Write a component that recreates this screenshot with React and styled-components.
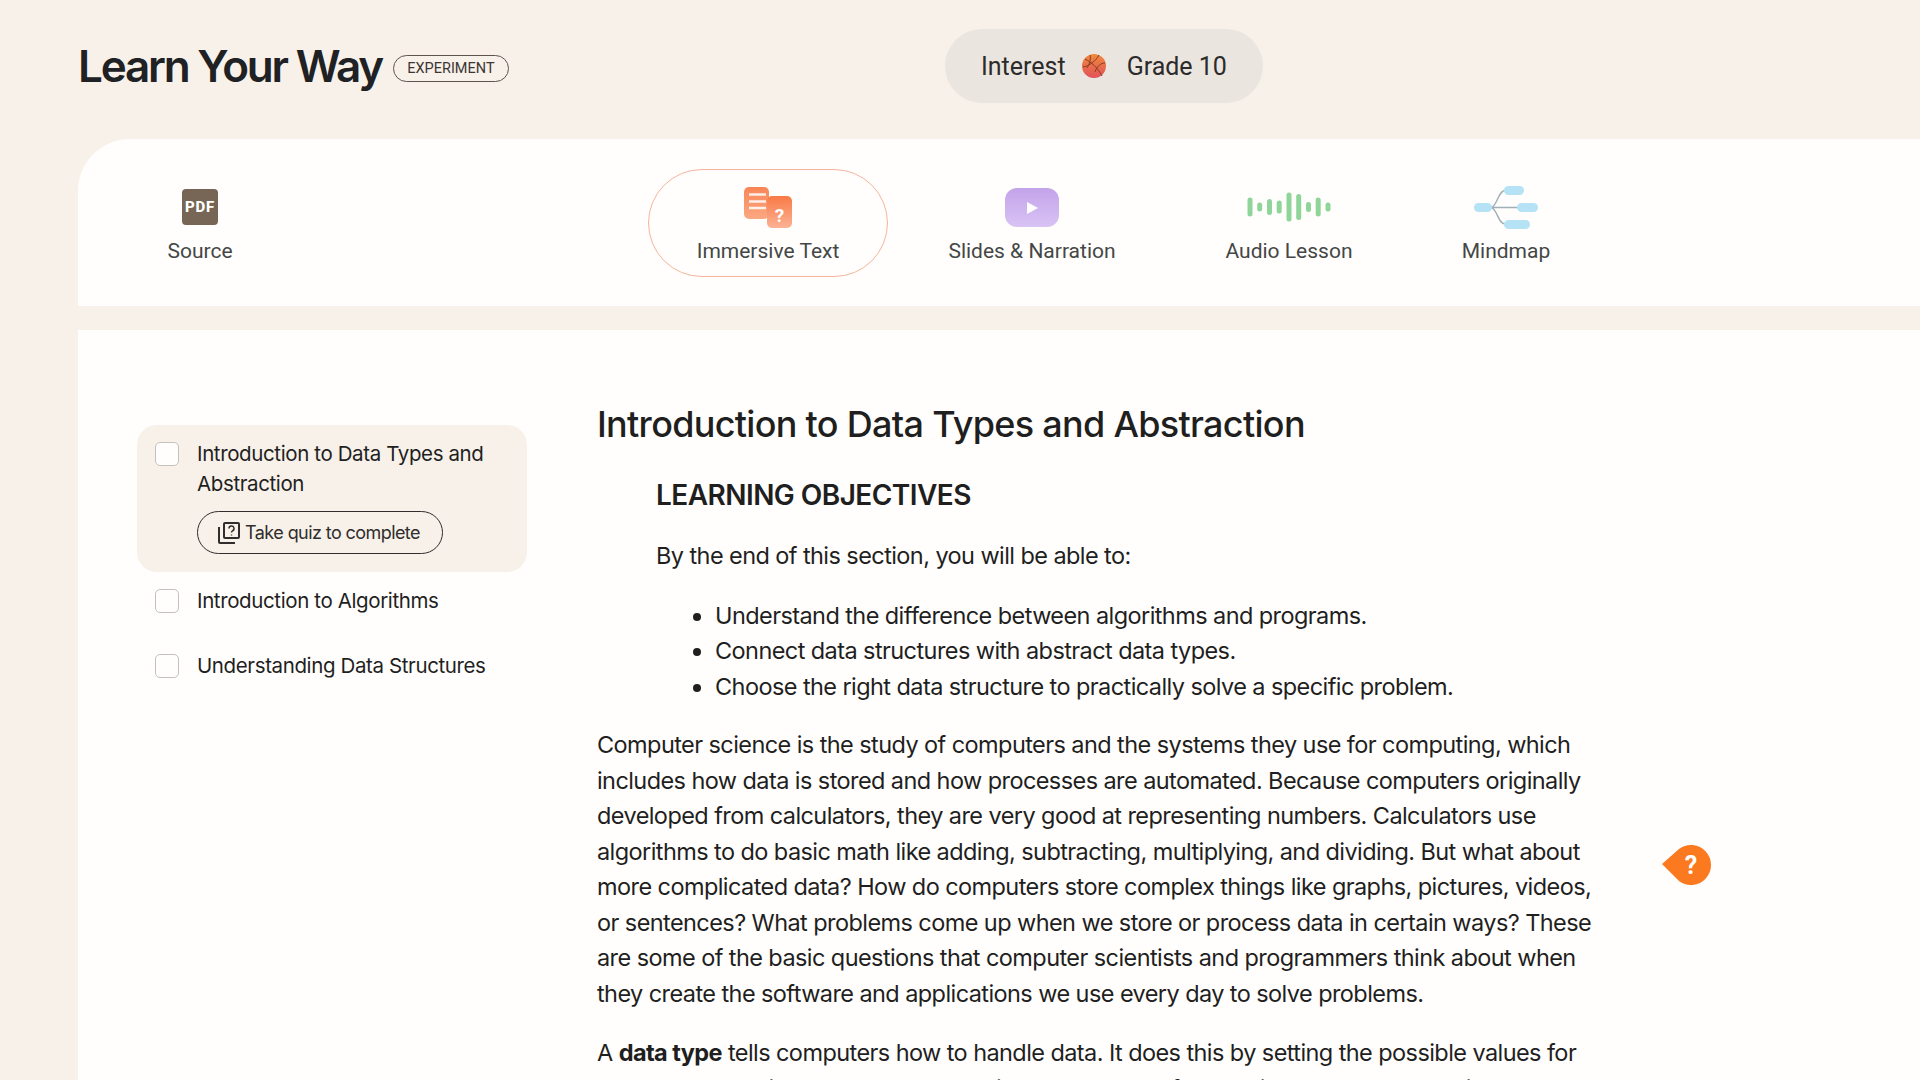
import React from 'react';
import styled, { createGlobalStyle } from 'styled-components';

const Global = createGlobalStyle`
  html, body { margin: 0; padding: 0; height: 100%; overflow: hidden; background: #f7f1ea; }
  body { font-family: Inter, "Noto Sans", sans-serif; color: #1f1f1f; }
  #root { height: 1080px; overflow: hidden; }
  * { box-sizing: border-box; }
`;

const Page = styled.div`
  width: 1920px; height: 1080px; overflow: hidden; background: #f7f1ea;
  display: flex; flex-direction: column;
`;
const Header = styled.header`
  height: 139px; padding: 0 0 0 78px; display: grid; grid-template-columns: 867px auto; align-items: start;
`;
const Brand = styled.div`
  display: flex; align-items: center; gap: 11px; height: 132px;
`;
const Logo = styled.h1`
  margin: 0; font: 600 44px/1 Inter, sans-serif; letter-spacing: -2.2px; color: #202124;
`;
const Badge = styled.span`
  border: 1.5px solid #5f5350; border-radius: 14px; height: 27px; width: 116px; display: flex; align-items: center; justify-content: center;
  font: 400 14.5px Roboto, sans-serif; color: #3c3533; margin-top: 5px;
`;
const Pill = styled.div`
  margin-top: 29px; height: 74px; width: 318px; border-radius: 37px; background: #ebe5df;
  display: flex; align-items: center; padding-left: 36px; font: 400 25px Roboto, sans-serif; color: #2b2b2b;
`;
const Ball = styled.svg` width: 24px; height: 24px; margin: 0 21px 0 16px; `;

const Nav = styled.nav`
  height: 167px; margin-left: 78px; background: #fffefc; border-top-left-radius: 52px;
  display: flex; align-items: flex-start; position: relative;
`;
const Tab = styled.div`
  flex: none; width: ${p => p.$w}px; margin-left: ${p => p.$ml}px; margin-top: 30px; height: 108px;
  border-radius: 54px; border: ${p => (p.$active ? '1.5px solid #f6b49c' : '1.5px solid transparent')};
  display: flex; flex-direction: column; align-items: center; padding-top: 17px;
  font: 400 21px Roboto, sans-serif; color: #444746;
`;
const IconSlot = styled.div` height: 40px; display: flex; align-items: center; justify-content: center; margin-bottom: 12px; `;
const Pdf = styled.div`
  width: 36px; height: 36px; background: #776655; border-radius: 4px; color: #fff;
  font: 800 15px Roboto, sans-serif; letter-spacing: .8px;
  display: flex; align-items: center; justify-content: center;
`;
const Gap = styled.div` height: 24px; flex: none; `;

const Content = styled.main`
  flex: 1; margin-left: 78px; background: #fffefc; display: grid; grid-template-columns: 519px 1000px; min-height: 0; position: relative;
`;
const Side = styled.aside` padding: 95px 0 0 59px; display: flex; flex-direction: column; `;
const SideItem = styled.div`
  width: 390px; padding: ${p => (p.$active ? '14px 18px 18px' : '0 18px')}; background: ${p => (p.$active ? '#f7f1ea' : 'transparent')};
  border-radius: 20px; display: grid; grid-template-columns: 24px 1fr; column-gap: 18px;
  margin-bottom: ${p => p.$mb || 0}px;
  font: 400 20.5px/30px Inter, sans-serif; color: #1f1f1f; letter-spacing: -0.38px;
`;
const Check = styled.span`
  width: 24px; height: 24px; border: 1.5px solid #c4c0bc; border-radius: 5px; background: #fffefc; margin-top: 3px; display: block;
`;
const QuizBtn = styled.button`
  grid-column: 2; width: 246px; height: 43px; margin-top: 12px; border-radius: 22px; border: 1.5px solid #302d2c; background: transparent;
  display: flex; align-items: center; justify-content: center; gap: 4px; font: 400 18px Inter, sans-serif; color: #302d2c; letter-spacing: -0.58px; padding: 0 3px 0 0;
`;
const Article = styled.article` padding-top: 72px; font: 400 23.5px/35.5px Inter, sans-serif; color: #1f1f1f; letter-spacing: -0.58px; `;
const H1 = styled.h2` margin: 0; font: 500 36px/44px Inter, sans-serif; letter-spacing: -0.7px; `;
const H2 = styled.h3` margin: 31px 0 0 59px; font: 600 28px/36px Inter, sans-serif; letter-spacing: -0.55px; `;
const P = styled.p` margin: ${p => p.$mt || 0}px 0 0 ${p => p.$ml || 0}px; `;
const Ul = styled.ul` margin: 24px 0 0 59px; padding: 0 0 0 59px; `;
const Marker = styled.svg` position: absolute; left: 1583px; top: 513px; width: 50px; height: 46px; `;

const tabs = [
  { label: 'Source', w: 200, ml: 22, icon: <Pdf>PDF</Pdf> },
  { label: 'Immersive Text', w: 240, ml: 348, active: true, icon: (
    <svg width="48" height="41" viewBox="0 0 48 41">
      <defs>
        <linearGradient id="o1" x1="0" y1="0" x2="0" y2="1"><stop offset="0" stopColor="#f98555" /><stop offset="1" stopColor="#fba882" /></linearGradient>
        <linearGradient id="o2" x1="0" y1="0" x2="0" y2="1"><stop offset="0" stopColor="#f97a45" /><stop offset="1" stopColor="#fbb295" /></linearGradient>
      </defs>
      <rect x="0" y="0" width="25" height="32" rx="5" fill="url(#o1)" />
      <rect x="23" y="9" width="25" height="32" rx="5" fill="url(#o2)" />
      <path d="M5 7.5h17M5 14.5h17M5 21h17" stroke="#fff" strokeOpacity=".85" strokeWidth="2.4" />
      <text x="35.5" y="35" textAnchor="middle" fill="#fff" fontSize="19" fontWeight="700" fontFamily="Roboto">?</text>
    </svg>
  ) },
  { label: 'Slides & Narration', w: 210, ml: 39, icon: (
    <svg width="54" height="39" viewBox="0 0 54 39">
      <defs><linearGradient id="p1" x1="0" y1="0" x2="0" y2="1"><stop offset="0" stopColor="#c3a3ea" /><stop offset="1" stopColor="#d9c3f4" /></linearGradient></defs>
      <rect width="54" height="39" rx="12" fill="url(#p1)" />
      <path d="M22 14l11 6-11 6z" fill="#fff" />
    </svg>
  ) },
  { label: 'Audio Lesson', w: 180, ml: 62, icon: (
    <svg width="84" height="30" viewBox="0 0 84 30" fill="none" stroke="#8fd59a" strokeLinecap="round" strokeWidth="5">
      {[[3,7],[12.7,2],[22.5,5.5],[32.2,4],[42,12],[51.7,10.5],[61.5,2.5],[71.2,7],[81,2]].map(([x, h]) => <path key={x} d={`M${x} ${15 - h}V${15 + h}`} />)}
    </svg>
  ) },
  { label: 'Mindmap', w: 120, ml: 67, icon: (
    <svg width="64" height="43" viewBox="0 0 64 43">
      <path d="M17 21.5C23 21 24 4.5 31 4.5M17 21.5H44M17 21.5C23 22 24 38 31 38" stroke="#9fb0b8" strokeWidth="1.4" fill="none" />
      <rect x="0" y="17" width="18" height="9" rx="4.5" fill="#b5e2f5" />
      <rect x="30" y="0" width="20" height="9" rx="4.5" fill="#b5e2f5" />
      <rect x="43" y="17" width="21" height="9" rx="4.5" fill="#b5e2f5" />
      <rect x="30" y="34" width="26" height="9" rx="4.5" fill="#b5e2f5" />
    </svg>
  ) },
];

export default function App() {
  return (
    <Page>
      <Global />
      <Header>
        <Brand>
          <Logo>Learn Your Way</Logo>
          <Badge>EXPERIMENT</Badge>
        </Brand>
        <Pill>
          Interest
          <Ball viewBox="0 0 24 24">
            <defs><linearGradient id="b1" x1="0" y1="0" x2="0" y2="1"><stop offset="0" stopColor="#f08a3c" /><stop offset="1" stopColor="#e2505a" /></linearGradient></defs>
            <circle cx="12" cy="12" r="12" fill="url(#b1)" />
            <path d="M3 5c6 3 13 9 17 17M1 13c6-1 13-6 16-12M8 1c1 4 0 8-3 13M23 9c-4 0-8 3-10 9" stroke="#8a3d20" strokeWidth="1" fill="none" />
          </Ball>
          Grade 10
        </Pill>
      </Header>
      <Nav>
        {tabs.map(t => (
          <Tab key={t.label} $w={t.w} $ml={t.ml} $active={t.active}>
            <IconSlot>{t.icon}</IconSlot>
            {t.label}
          </Tab>
        ))}
      </Nav>
      <Gap />
      <Content>
        <Side>
          <SideItem $active $mb={14}>
            <Check />
            <span>Introduction to Data Types and Abstraction</span>
            <QuizBtn>
              <svg width="24" height="24" viewBox="0 0 24 24" fill="none" stroke="#302d2c" strokeWidth="2">
                <rect x="7" y="2" width="15" height="15" rx="1" />
                <path d="M2 6v15a1 1 0 0 0 1 1h15" />
                <path d="M12 7.5a2.5 2.5 0 1 1 3.5 2.3c-.8.4-1 .8-1 1.7M14.5 13.5v1" strokeWidth="1.5" />
              </svg>
              Take quiz to complete
            </QuizBtn>
          </SideItem>
          <SideItem $mb={35}><Check /><span>Introduction to Algorithms</span></SideItem>
          <SideItem><Check /><span>Understanding Data Structures</span></SideItem>
        </Side>
        <Article>
          <H1>Introduction to Data Types and Abstraction</H1>
          <H2>LEARNING OBJECTIVES</H2>
          <P $mt={25} $ml={59}>By the end of this section, you will be able to:</P>
          <Ul>
            <li>Understand the difference between algorithms and programs.</li>
            <li>Connect data structures with abstract data types.</li>
            <li>Choose the right data structure to practically solve a specific problem.</li>
          </Ul>
          <P $mt={23}>Computer science is the study of computers and the systems they use for computing, which includes how data is stored and how processes are automated. Because computers originally developed from calculators, they are very good at representing numbers. Calculators use algorithms to do basic math like adding, subtracting, multiplying, and dividing. But what about more complicated data? How do computers store complex things like graphs, pictures, videos, or sentences? What problems come up when we store or process data in certain ways? These are some of the basic questions that computer scientists and programmers think about when they create the software and applications we use every day to solve problems.</P>
          <P $mt={24}>A <b>data type</b> tells computers how to handle data. It does this by setting the possible values for the data and variables, and the operations you can perform on it. For example, the integer</P>
        </Article>
        <Marker viewBox="0 0 50 46">
          <path d="M1 21L18 6a20 20 0 1 1 0 32z" fill="#fb7a1f" />
          <text x="30" y="31" textAnchor="middle" fill="#fff" fontSize="25" fontWeight="700" fontFamily="Roboto">?</text>
        </Marker>
      </Content>
    </Page>
  );
}
